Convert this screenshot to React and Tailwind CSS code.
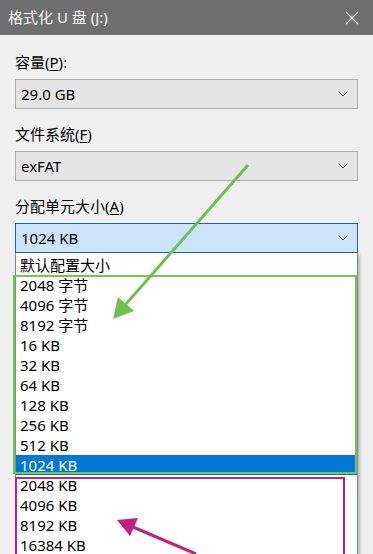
import React from 'react'

const sizes = [
  '默认配置大小',
  '2048 字节',
  '4096 字节',
  '8192 字节',
  '16 KB',
  '32 KB',
  '64 KB',
  '128 KB',
  '256 KB',
  '512 KB',
  '1024 KB',
  '2048 KB',
  '4096 KB',
  '8192 KB',
  '16384 KB',
]

const font = { fontFamily: '"Noto Sans", "Noto Sans CJK SC", sans-serif' }

function Chevron() {
  return (
    <svg width="10" height="6" viewBox="0 0 10 6" className="text-[#505050]">
      <path d="M0.5 0.5 L5 5 L9.5 0.5" fill="none" stroke="currentColor" strokeWidth="1" />
    </svg>
  )
}

function Label({ text, hot, tail = '' }) {
  return (
    <div className="h-5 leading-5 text-[15px] text-black mb-[7px]">
      {text}(<span className="underline underline-offset-2">{hot}</span>){tail}
    </div>
  )
}

function Combo({ value, active }) {
  return (
    <div
      className={
        'h-[30px] flex items-center justify-between pl-[5px] pr-[9px] border text-[15px] text-black ' +
        (active ? 'bg-[#cce4f7] border-[#1c67a6]' : 'bg-[#e5e5e5] border-[#adadad] mb-[15px]')
      }
    >
      <span>{value}</span>
      <Chevron />
    </div>
  )
}

export default function App() {
  return (
    <div className="relative w-[373px] h-[554px] overflow-hidden bg-[#f0f0f0]" style={font}>
      {/* title bar */}
      <div className="h-[35px] bg-[#6f6f6f] flex items-center justify-between pl-[8px] pr-[14px]">
        <span className="text-[15px] text-[#f4f4f4]">格式化 U 盘 (J:)</span>
        <svg width="14" height="14" viewBox="0 0 14 14">
          <path d="M1 1 L13 13 M13 1 L1 13" stroke="#f4f4f4" strokeWidth="1.2" />
        </svg>
      </div>

      <div className="pt-[17px] pl-[15px] pr-[15px]">
        <Label text="容量" hot="P" tail=":" />
        <Combo value="29.0 GB" />
        <Label text="文件系统" hot="F" />
        <Combo value="exFAT" />
        <Label text="分配单元大小" hot="A" />
        <Combo value="1024 KB" active />

        {/* dropdown list */}
        <div className="bg-white border border-[#7a8a99] border-t-0 shadow-[2px_2px_3px_rgba(0,0,0,0.25)] pt-[2px]">
          {sizes.map(s => (
            <div
              key={s}
              className={
                'h-5 leading-5 pl-[4px] text-[15px] ' +
                (s === '1024 KB' ? 'bg-[#0078d7] text-white' : 'text-black')
              }
            >
              {s}
            </div>
          ))}
        </div>
      </div>

      {/* annotations */}
      <svg className="absolute inset-0 pointer-events-none" width="373" height="554" viewBox="0 0 373 554">
        <rect x="14" y="276" width="342" height="197" fill="none" stroke="#78c25a" strokeWidth="2" />
        <rect x="16" y="478" width="328" height="90" fill="none" stroke="#c4207e" strokeWidth="2" />
        <line x1="248" y1="165" x2="126" y2="304" stroke="#70c050" strokeWidth="3" />
        <polygon points="113,319 118,297 134,311" fill="#70c050" />
        <line x1="196" y1="554" x2="133" y2="527" stroke="#c4207e" strokeWidth="3" />
        <polygon points="117,520 138,518 130,536" fill="#c4207e" />
      </svg>
    </div>
  )
}
